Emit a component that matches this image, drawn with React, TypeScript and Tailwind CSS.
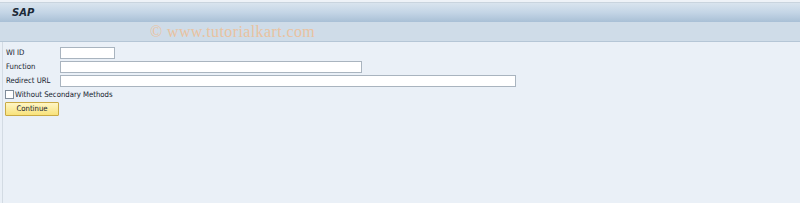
import React from 'react';

export default function App() {
    return (
        <div className="w-[800px] h-[203px] bg-[#eaf0f7] flex flex-col overflow-hidden" style={{ fontFamily: '"DejaVu Sans Condensed", "Liberation Sans", sans-serif' }}>
            {/* Title bar */}
            <div className="h-[3px] bg-[#eef2f7] border-b border-[#c9d4de]" />
            <div className="h-[19px] bg-gradient-to-b from-[#d9e4ee] via-[#c4d5e6] to-[#a9c0d6] flex items-center px-3">
                <span className="text-[10px] font-bold italic text-[#1c2a38]" style={{ fontFamily: '"DejaVu Sans", sans-serif' }}>SAP</span>
            </div>

            {/* Toolbar band with watermark */}
            <div className="h-[20px] bg-[#cfdce8] border-b border-[#b5c6d6] flex items-center">
                <span className="ml-[150px] text-[16px] tracking-[0.4px] text-[#e9c2a0]" style={{ fontFamily: '"Liberation Serif", serif' }}>
                    © www.tutorialkart.com
                </span>
            </div>

            {/* Form */}
            <div className="flex-1 border-l border-[#d3dbe3] ml-[2px] pt-[5px] pl-[1px] text-[7.7px] text-[#15212d]">
                <div className="flex flex-col gap-[2px]">
                    <div className="flex items-center h-[12px]">
                        <span className="w-[56px] pl-[2px]">WI ID</span>
                        <div className="w-[55px] h-[12px] bg-white border border-[#a9b4bf]" />
                    </div>
                    <div className="flex items-center h-[12px]">
                        <span className="w-[56px] pl-[2px]">Function</span>
                        <div className="w-[302px] h-[12px] bg-white border border-[#a9b4bf]" />
                    </div>
                    <div className="flex items-center h-[12px]">
                        <span className="w-[56px] pl-[2px]">Redirect URL</span>
                        <div className="w-[456px] h-[12px] bg-white border border-[#a9b4bf]" />
                    </div>
                </div>

                <div className="flex items-center gap-[1px] mt-[2px] h-[11px] pl-[1px]">
                    <div className="w-[9px] h-[9px] bg-white border border-[#7f8c99]" />
                    <span>Without Secondary Methods</span>
                </div>

                <button className="mt-[2px] ml-[1px] w-[54px] h-[14px] bg-gradient-to-b from-[#fff6c4] to-[#f8e27a] border border-[#c9aa45] rounded-[1px] text-[7.7px] text-[#15212d] flex items-center justify-center">
                    Continue
                </button>
            </div>
        </div>
    );
}
